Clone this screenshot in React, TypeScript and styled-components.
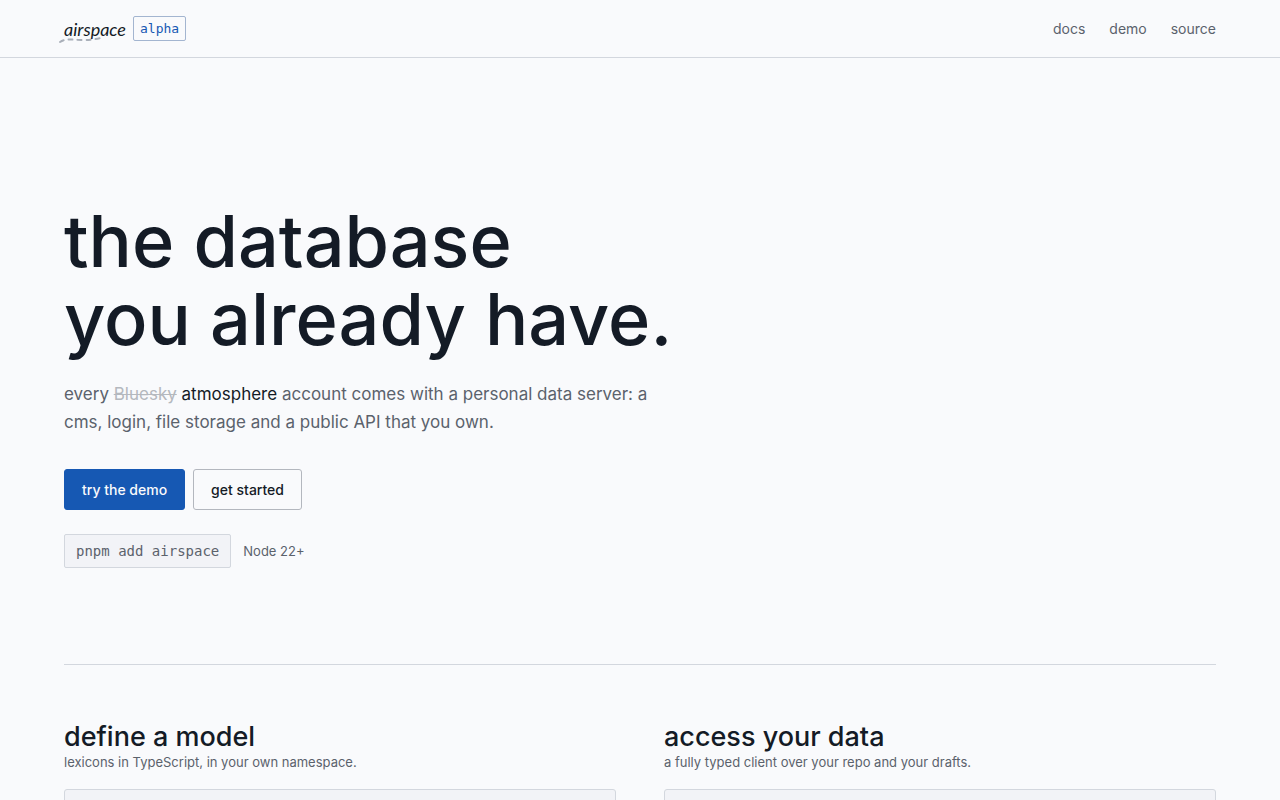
import React from "react";
import styled, { createGlobalStyle } from "styled-components";

const ink = "#141b26";
const muted = "#5b626c";
const line = "#d3d7de";
const accent = "#1658b3";
const sans = `Inter, "Liberation Sans", sans-serif`;
const mono = `"DejaVu Sans Mono", "Liberation Mono", monospace`;

const GlobalStyle = createGlobalStyle`
  *, *::before, *::after { box-sizing: border-box; }
  html { scrollbar-width: none; }
  body {
    margin: 0;
    background: #f9fafc;
    color: ${ink};
    font-family: ${sans};
    font-size: 14px;
    line-height: 20px;
  }
`;

const Header = styled.header`
  display: flex;
  align-items: center;
  justify-content: space-between;
  padding: 16px 64px;
  border-bottom: 1px solid ${line};
`;

const Brand = styled.a`
  display: flex;
  align-items: center;
  gap: 7px;
  color: ${ink};
  text-decoration: none;
`;

const Wordmark = styled.span`
  position: relative;
  font-family: Lato, sans-serif;
  font-size: 18px;
  font-style: italic;
  line-height: 20px;
`;

const Trail = styled.svg`
  position: absolute;
  left: -6px;
  bottom: -5px;
  width: 50px;
  height: 9px;
  z-index: -1;
`;

const Tag = styled.span`
  padding: 2px 6px;
  border: 1px solid #a3b5d0;
  border-radius: 2px;
  color: ${accent};
  font-family: ${mono};
  font-size: 13px;
  line-height: 19px;
`;

const Nav = styled.nav`
  display: flex;
  gap: 24px;
`;

const NavLink = styled.a`
  color: ${muted};
  text-decoration: none;
`;

const Main = styled.main`
  padding: 0 64px;
`;

const Hero = styled.section`
  padding: 144px 0 96px;
  border-bottom: 1px solid ${line};
`;

const Title = styled.h1`
  margin: 0 0 22px;
  font-size: 72px;
  font-weight: 500;
  line-height: 78px;
`;

const Lead = styled.p`
  max-width: 608px;
  margin: 0 0 33px;
  color: ${muted};
  font-size: 17px;
  line-height: 28px;
`;

const Struck = styled.s`
  color: #b4b8be;
`;

const Strong = styled.span`
  color: ${ink};
`;

const Row = styled.div<{ $gap: number }>`
  display: flex;
  align-items: center;
  gap: ${(p) => p.$gap}px;
  & + & {
    margin-top: 24px;
  }
`;

const Button = styled.button<{ $primary?: boolean }>`
  padding: 10px 17px;
  border: 1px solid ${(p) => (p.$primary ? accent : "#b3b7be")};
  border-radius: 3px;
  background: ${(p) => (p.$primary ? accent : "transparent")};
  color: ${(p) => (p.$primary ? "#f9fafc" : ink)};
  font-family: ${sans};
  font-size: 14px;
  font-weight: 500;
  line-height: 19px;
  cursor: pointer;
`;

const Command = styled.code`
  padding: 6px 11px;
  border: 1px solid ${line};
  border-radius: 2px;
  background: #f2f3f7;
  color: ${muted};
  font-family: ${mono};
  font-size: 14px;
  line-height: 20px;
`;

const Note = styled.span`
  color: ${muted};
  font-size: 13px;
`;

const Features = styled.section`
  display: grid;
  grid-template-columns: repeat(2, minmax(0, 1fr));
  gap: 48px;
  padding: 56px 0 96px;
`;

const FeatureTitle = styled.h2`
  margin: 0;
  font-size: 27px;
  font-weight: 500;
  line-height: 31px;
`;

const FeatureText = styled.p`
  margin: 0 0 17px;
  color: ${muted};
  font-size: 13px;
`;

const Panel = styled.div`
  min-height: 320px;
  border: 1px solid ${line};
  border-radius: 3px;
  background: #f2f3f7;
`;

const features = [
  { title: "define a model", text: "lexicons in TypeScript, in your own namespace." },
  { title: "access your data", text: "a fully typed client over your repo and your drafts." },
];

export default function App() {
  return (
    <>
      <GlobalStyle />
      <Header>
        <Brand href="#">
          <Wordmark>
            airspace
            <Trail viewBox="0 0 50 9" aria-hidden="true">
              <path
                d="M2 7 C8 3 14 5 24 5 S40 4 46 2"
                fill="none"
                stroke="#a9afb9"
                strokeWidth="2"
                strokeDasharray="4 5"
                strokeLinecap="round"
              />
            </Trail>
          </Wordmark>
          <Tag>alpha</Tag>
        </Brand>
        <Nav>
          <NavLink href="#docs">docs</NavLink>
          <NavLink href="#demo">demo</NavLink>
          <NavLink href="#source">source</NavLink>
        </Nav>
      </Header>
      <Main>
        <Hero>
          <Title>
            the database
            <br />
            you already have.
          </Title>
          <Lead>
            every <Struck>Bluesky</Struck> <Strong>atmosphere</Strong> account comes with a
            personal data server: a cms, login, file storage and a public API that you own.
          </Lead>
          <Row $gap={8}>
            <Button $primary>try the demo</Button>
            <Button>get started</Button>
          </Row>
          <Row $gap={12}>
            <Command>pnpm add airspace</Command>
            <Note>Node 22+</Note>
          </Row>
        </Hero>
        <Features>
          {features.map((f) => (
            <div key={f.title}>
              <FeatureTitle>{f.title}</FeatureTitle>
              <FeatureText>{f.text}</FeatureText>
              <Panel />
            </div>
          ))}
        </Features>
      </Main>
    </>
  );
}
